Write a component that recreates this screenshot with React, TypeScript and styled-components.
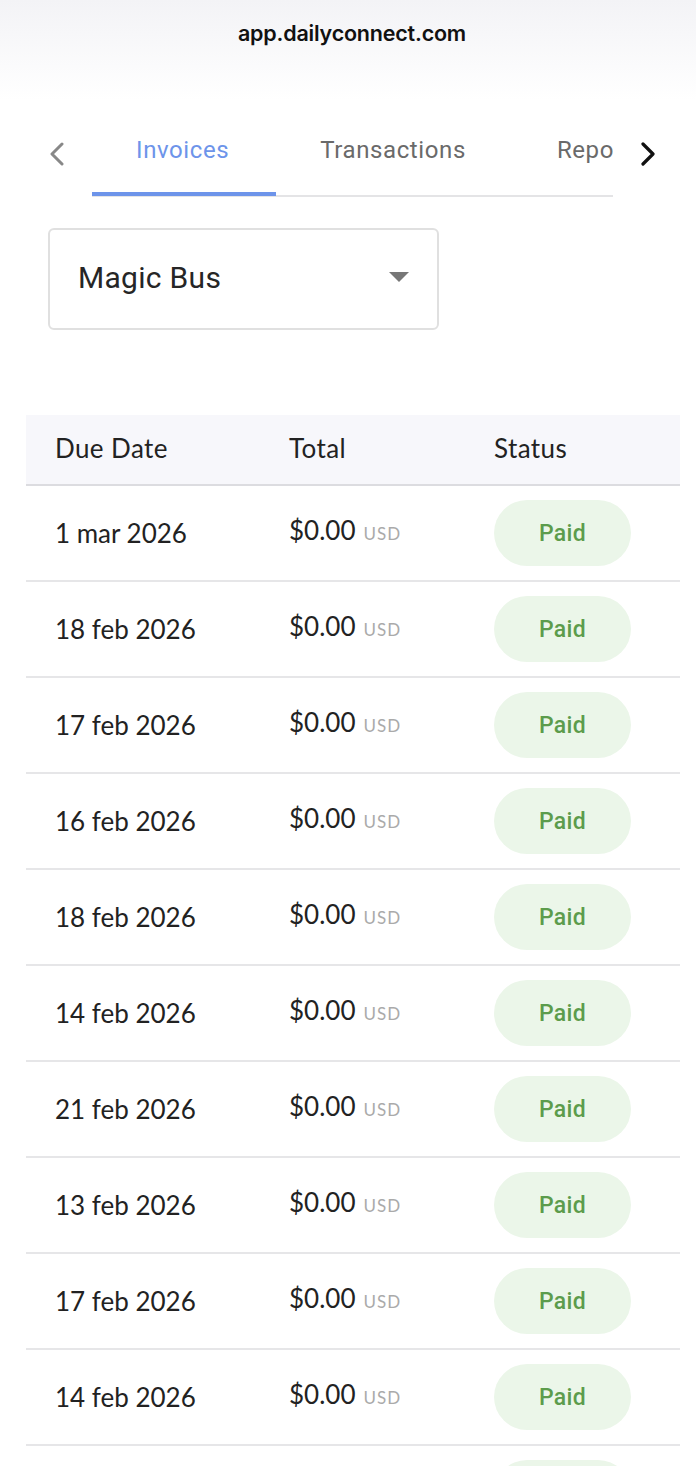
import React from 'react'
import styled, { createGlobalStyle } from 'styled-components'

const GlobalStyle = createGlobalStyle`
  body {
    margin: 0;
    background: #fff;
    font-family: Lato, "Open Sans", sans-serif;
  }
`

const Page = styled.div`
  width: 696px;
  min-height: 1466px;
  overflow: hidden;
  background: #fff;
`

const AddressBar = styled.div`
  height: 100px;
  background: linear-gradient(#f3f3f6, #ffffff);
  display: flex;
  justify-content: center;
  padding: 20px 0 0 8px;
  box-sizing: border-box;
  font-family: Inter, "Liberation Sans", sans-serif;
  font-weight: 600;
  font-size: 21.5px;
  color: #111;
  letter-spacing: -0.2px;
`

const TabBar = styled.div`
  display: flex;
  align-items: flex-start;
  height: 97px;
`

const Chevron = styled.button<{ $dark?: boolean }>`
  width: 92px;
  height: 97px;
  border: 0;
  background: none;
  padding: 42px 0 0 0;
  display: flex;
  justify-content: center;
  box-sizing: border-box;
  color: ${p => (p.$dark ? '#111' : '#888')};
  &:first-child {
    padding-left: 22px;
  }
  &:last-child {
    width: 83px;
    padding-right: 14px;
  }
`

const TabStrip = styled.div`
  flex: 1;
  overflow: hidden;
  display: flex;
  height: 97px;
  background: linear-gradient(#e4e4e6, #e4e4e6) bottom / 100% 2px no-repeat;
`

const Tab = styled.div<{ $active?: boolean }>`
  flex: none;
  height: 96px;
  padding: 36px 47px 0 44px;
  box-sizing: border-box;
  font-family: Roboto, sans-serif;
  font-size: 24px;
  letter-spacing: 0.6px;
  color: ${p => (p.$active ? '#6d94ea' : '#6a6a6a')};
  border-bottom: 4px solid ${p => (p.$active ? '#6d94ea' : 'transparent')};
`

const SelectBox = styled.div`
  margin: 31px 0 0 48px;
  width: 391px;
  height: 102px;
  box-sizing: border-box;
  border: 2px solid #e0e0e0;
  border-radius: 6px;
  display: flex;
  align-items: center;
  justify-content: space-between;
  padding: 0 28px 4px 28px;
  font-family: Roboto, sans-serif;
  font-size: 30px;
  letter-spacing: 0.3px;
  color: #262626;
`

const Caret = styled.span`
  width: 0;
  height: 0;
  border-left: 10px solid transparent;
  border-right: 10px solid transparent;
  border-top: 10px solid #777;
`

const Table = styled.div`
  margin: 85px 16px 0 26px;
`

const Row = styled.div<{ $head?: boolean }>`
  display: grid;
  grid-template-columns: 234px 205px 1fr;
  align-items: center;
  height: ${p => (p.$head ? '71px' : '96px')};
  padding-left: 29px;
  box-sizing: border-box;
  background: ${p => (p.$head ? '#f7f7fb' : '#fff')};
  border-bottom: 2px solid ${p => (p.$head ? '#dcdce0' : '#e6e6e8')};
  font-size: 26px;
  letter-spacing: ${p => (p.$head ? '0.4px' : '0')};
  color: #222;
  padding-bottom: ${p => (p.$head ? '4px' : '0')};
`

const Amount = styled.span`
  font-size: 26px;
  color: #222;
  padding-bottom: 6px;
`

const Currency = styled.span`
  font-size: 17px;
  color: #aaa;
  margin-left: 8px;
  letter-spacing: 1px;
`

const Pill = styled.span`
  display: flex;
  align-items: center;
  justify-content: center;
  width: 137px;
  height: 66px;
  border-radius: 33px;
  background: #ebf6e9;
  color: #5c9c4c;
  font-family: Roboto, sans-serif;
  font-weight: 500;
  font-size: 23px;
  letter-spacing: 0.3px;
`

const DATES = [
  '1 mar 2026',
  '18 feb 2026',
  '17 feb 2026',
  '16 feb 2026',
  '18 feb 2026',
  '14 feb 2026',
  '21 feb 2026',
  '13 feb 2026',
  '17 feb 2026',
  '14 feb 2026',
  '12 feb 2026',
]

export default function App() {
  return (
    <Page>
      <GlobalStyle />
      <AddressBar>app.dailyconnect.com</AddressBar>
      <TabBar>
        <Chevron aria-label="previous">
          <svg width="16" height="24" viewBox="0 0 16 24" fill="none">
            <path d="M13 2 L3 12 L13 22" stroke="currentColor" strokeWidth="3" strokeLinecap="round" strokeLinejoin="round" />
          </svg>
        </Chevron>
        <TabStrip>
          <Tab $active>Invoices</Tab>
          <Tab>Transactions</Tab>
          <Tab>Reports</Tab>
        </TabStrip>
        <Chevron $dark aria-label="next">
          <svg width="16" height="24" viewBox="0 0 16 24" fill="none">
            <path d="M3 2 L13 12 L3 22" stroke="currentColor" strokeWidth="3.2" strokeLinecap="round" strokeLinejoin="round" />
          </svg>
        </Chevron>
      </TabBar>
      <SelectBox>
        Magic Bus
        <Caret />
      </SelectBox>
      <Table>
        <Row $head>
          <span>Due Date</span>
          <span>Total</span>
          <span>Status</span>
        </Row>
        {DATES.map((d, i) => (
          <Row key={i}>
            <span>{d}</span>
            <Amount>
              $0.00<Currency>USD</Currency>
            </Amount>
            <Pill>Paid</Pill>
          </Row>
        ))}
      </Table>
    </Page>
  )
}
